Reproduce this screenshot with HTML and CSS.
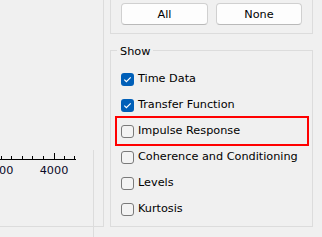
FILE: index.html
```html
<!DOCTYPE html>
<html>
<head>
<meta charset="utf-8">
<link rel="stylesheet" href="styles.css">
</head>
<body>
<div class="page">
  <div class="outer">
    <div class="frame">
      <svg class="axis" width="93" height="30" viewBox="0 0 93 30">
        <rect x="0" y="9" width="76" height="1" fill="#000"/>
        <rect x="1" y="6" width="1" height="3" fill="#000"/>
        <rect x="11" y="6" width="1" height="3" fill="#000"/>
        <rect x="22" y="6" width="1" height="3" fill="#000"/>
        <rect x="32" y="6" width="1" height="3" fill="#000"/>
        <rect x="43" y="6" width="1" height="3" fill="#000"/>
        <rect x="54" y="3" width="1" height="6" fill="#000"/>
        <rect x="64" y="6" width="1" height="3" fill="#000"/>
        <rect x="74" y="6" width="1" height="3" fill="#000"/>
        <text class="tick" x="-1" y="24" text-anchor="middle">3000</text>
        <text class="tick" x="54" y="24" text-anchor="middle">4000</text>
      </svg>
    </div>
  </div>
  <div class="side">
    <div class="group top">
      <div class="buttons">
        <button class="btn all">All</button>
        <button class="btn none">None</button>
      </div>
    </div>
    <div class="group show">
      <div class="legend">Show</div>
      <div class="rows">
        <div class="row"><span class="cb on"><svg width="13" height="13" viewBox="0 0 13 13"><path d="M3.3 6.6 L5.4 8.7 L9.7 4.3" fill="none" stroke="#fff" stroke-width="1.2"/></svg></span><span class="lbl">Time Data</span></div>
        <div class="row"><span class="cb on"><svg width="13" height="13" viewBox="0 0 13 13"><path d="M3.3 6.6 L5.4 8.7 L9.7 4.3" fill="none" stroke="#fff" stroke-width="1.2"/></svg></span><span class="lbl">Transfer Function</span></div>
        <div class="row marked"><span class="cb off"></span><span class="lbl">Impulse Response</span></div>
        <div class="row"><span class="cb off"></span><span class="lbl">Coherence and Conditioning</span></div>
        <div class="row"><span class="cb off"></span><span class="lbl">Levels</span></div>
        <div class="row"><span class="cb off"></span><span class="lbl">Kurtosis</span></div>
      </div>
    </div>
  </div>
</div>
</body>
</html>
```
FILE: styles.css
```css
html, body {
  margin: 0;
  padding: 0;
  background: #f0f0f0;
  overflow: hidden;
}
body {
  width: 322px;
  height: 237px;
  font-family: "DejaVu Sans", sans-serif;
  font-size: 11.25px;
  color: #000;
}
.page {
  display: flex;
  align-items: flex-start;
  height: 237px;
  overflow: hidden;
}
.outer {
  width: 103px;
  height: 226px;
  border-right: 1px solid #dcdcdc;
  border-bottom: 1px solid #dcdcdc;
  flex: none;
}
.frame {
  width: 93px;
  height: 216px;
  border-right: 1px solid #dcdcdc;
  border-bottom: 1px solid #dcdcdc;
}
.axis {
  display: block;
  margin-top: 150px;
}
.tick {
  font-family: "DejaVu Sans", sans-serif;
  font-size: 11.25px;
  fill: #0a0a28;
}
.side {
  margin-left: 6px;
  width: 203px;
  flex: none;
}
.group {
  border: 1px solid #dcdcdc;
}
.top {
  border-top: none;
  height: 33px;
}
.buttons {
  display: flex;
  gap: 8px;
  padding: 3px 0 0 10px;
}
.btn {
  font-family: "DejaVu Sans", sans-serif;
  font-size: 11.25px;
  color: #000;
  height: 22px;
  padding: 0;
  margin: 0;
  background: #fdfdfd;
  border: 1px solid #d0d0d0;
  border-bottom-color: #b9b9b9;
  border-radius: 4px;
}
.all { width: 87px; }
.none { width: 86px; }
.show {
  margin-top: 16px;
  height: 175px;
}
.legend {
  width: fit-content;
  margin: -6px 0 0 6px;
  padding: 0 3px;
  line-height: 14px;
  background: #f0f0f0;
}
.rows {
  margin-top: 7px;
}
.row {
  display: flex;
  align-items: center;
  gap: 4px;
  height: 26px;
  width: 186px;
  margin-left: 6px;
  padding-left: 4px;
}
.marked {
  outline: 2px solid #ff0000;
}
.cb {
  width: 13px;
  height: 13px;
  box-sizing: border-box;
  border-radius: 3px;
  flex: none;
}
.cb svg { display: block; }
.on {
  background: #005fb8;
}
.off {
  border: 1px solid #7a7a7a;
  background: #f3f3f3;
}
.lbl {
  line-height: 14px;
}
```
